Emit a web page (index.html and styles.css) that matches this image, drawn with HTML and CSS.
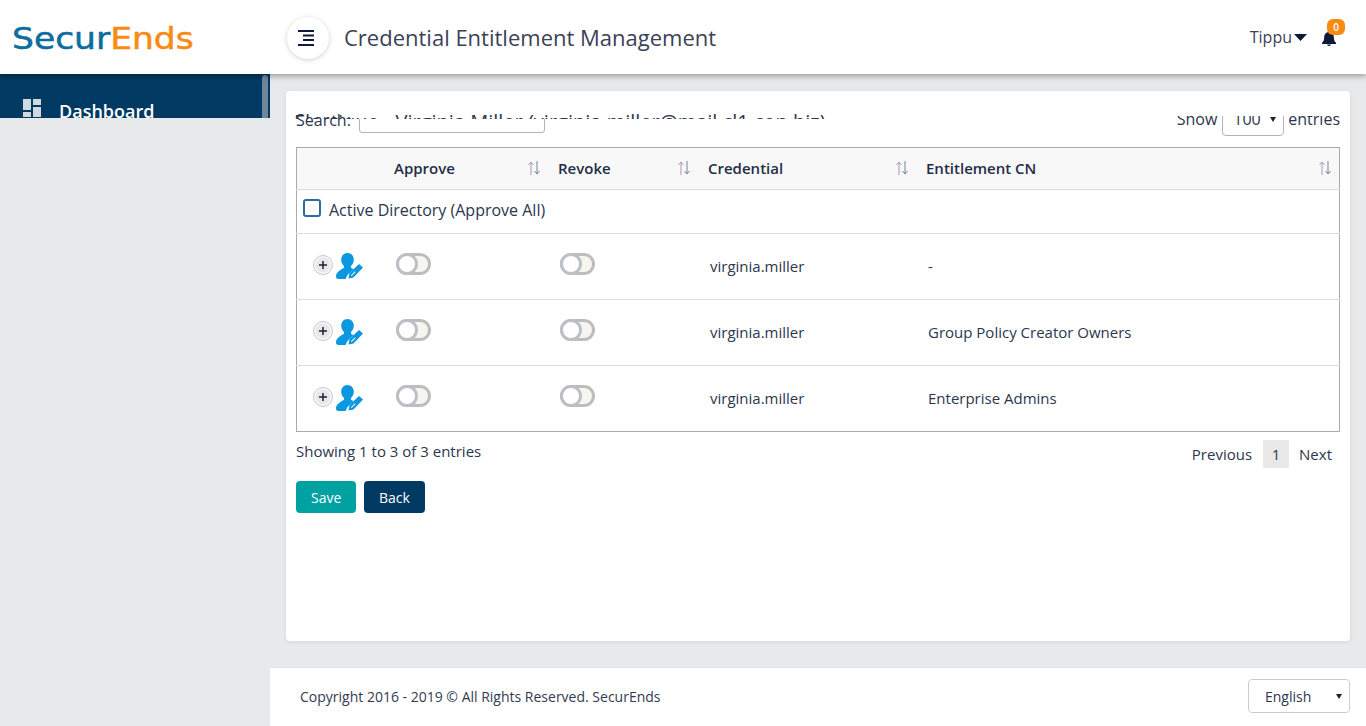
FILE: index.html
```html
<!DOCTYPE html>
<html lang="en">
<head>
<meta charset="utf-8">
<title>Credential Entitlement Management</title>
<link rel="stylesheet" href="styles.css">
</head>
<body>
<header class="topbar">
  <div class="brand"><div class="brand-text"><span class="brand-a">Secur</span><span class="brand-b">Ends</span></div></div>
  <div class="topbar-main">
    <button class="menu-btn" aria-label="Menu">
      <svg width="16" height="16" viewBox="0 0 16 16"><path d="M0 1h16M5 5.500h11M5 10h11M0 15h16" stroke="#0e1a3a" stroke-width="2" fill="none"/></svg>
    </button>
    <h1 class="page-title">Credential Entitlement Management</h1>
    <div class="user">Tippu<svg class="caret" width="13" height="7" viewBox="0 0 13 7"><path d="M0 0h13L6.500 7z" fill="#0e1a3a"/></svg></div>
    <div class="bell">
      <svg width="14" height="15" viewBox="0 0 14 15"><path d="M7 0a1.200 1.200 0 0 0-1.200 1.300C3.500 1.800 2.200 3.600 2.200 6c0 3.500-1 4.600-2.200 5.800V13h14v-1.200C12.800 10.600 11.800 9.500 11.800 6c0-2.400-1.300-4.200-3.600-4.700A1.200 1.200 0 0 0 7 0zM5.200 13.500a1.800 1.500 0 0 0 3.600 0z" fill="#0e1a3a"/></svg>
      <span class="badge">0</span>
    </div>
  </div>
</header>
<div class="layout">
  <aside class="sidebar-wrap">
    <nav class="sidebar">
      <a class="nav-item">
        <svg width="18" height="18" viewBox="0 0 18 18"><path d="M0 0h8v11H0zM10 0h8v6h-8zM0 13h8v5H0zM10 8h8v10h-8z" fill="#d0d8e0"/></svg>
        <span>Dashboard</span>
      </a>
      <div class="thumb"></div>
    </nav>
  </aside>
  <div class="main">
    <main class="content">
      <section class="card">
        <div class="card-title">Elastique - Virginia Miller (virginia.miller@mail.cl1.con.biz)</div>
        <div class="toolbar">
          <div class="search"><label class="search-label">Search:</label><input class="search-input" type="text"></div>
          <div class="length"><span class="length-show">Show</span><select class="length-select"><option>100</option></select><span>entries</span></div>
        </div>
        <table class="grid">
          <colgroup><col class="c0"><col class="c1"><col class="c2"><col class="c3"><col></colgroup>
          <thead>
            <tr>
              <th></th>
              <th><div class="th-in">Approve<svg class="sort" width="14" height="14" viewBox="0 0 14 14"><path d="M4 14V1M1.500 4L4 1l2.500 3" stroke="#a99aa9" fill="none"/><path d="M10 0v13M7.500 10l2.500 3 2.500-3" stroke="#76829a" fill="none"/></svg></div></th>
              <th><div class="th-in">Revoke<svg class="sort" width="14" height="14" viewBox="0 0 14 14"><path d="M4 14V1M1.500 4L4 1l2.500 3" stroke="#a99aa9" fill="none"/><path d="M10 0v13M7.500 10l2.500 3 2.500-3" stroke="#76829a" fill="none"/></svg></div></th>
              <th><div class="th-in">Credential<svg class="sort" width="14" height="14" viewBox="0 0 14 14"><path d="M4 14V1M1.500 4L4 1l2.500 3" stroke="#a99aa9" fill="none"/><path d="M10 0v13M7.500 10l2.500 3 2.500-3" stroke="#76829a" fill="none"/></svg></div></th>
              <th><div class="th-in">Entitlement CN<svg class="sort" width="14" height="14" viewBox="0 0 14 14"><path d="M4 14V1M1.500 4L4 1l2.500 3" stroke="#a99aa9" fill="none"/><path d="M10 0v13M7.500 10l2.500 3 2.500-3" stroke="#76829a" fill="none"/></svg></div></th>
            </tr>
          </thead>
          <tbody>
            <tr class="group">
              <td colspan="5"><div class="group-in"><span class="check"></span><span>Active Directory (Approve All)</span></div></td>
            </tr>
            <tr>
              <td><div class="tools"><span class="expander"><svg width="8" height="8" viewBox="0 0 8 8"><path d="M4 0v8M0 4h8" stroke="#222" stroke-width="1.500"/></svg></span><svg class="user-icon" width="27" height="26" viewBox="0 0 27 26"><path d="M11.500 0c3.700 0 6.300 2.800 6.300 6.800 0 2.700-1.200 4.900-2.800 6.100v1.900l2.500 1.100L11.500 22 9.500 26H2.500C.8 26 0 25 0 23.500c0-3.800 3.200-5.900 8-8.700v-1.900C6.400 11.700 5.200 9.500 5.200 6.800 5.200 2.800 7.800 0 11.500 0z" fill="#0b98e0"/><path d="M12.500 25.500l1-5.500L23 11l4 3.500L17.500 24.500zM15 22.300l.6.600 4-4-.6-.6z" fill="#0b98e0" fill-rule="evenodd"/></svg></div></td>
              <td><span class="toggle"></span></td>
              <td><span class="toggle"></span></td>
              <td class="cell-text">virginia.miller</td>
              <td class="cell-text">-</td>
            </tr>
            <tr>
              <td><div class="tools"><span class="expander"><svg width="8" height="8" viewBox="0 0 8 8"><path d="M4 0v8M0 4h8" stroke="#222" stroke-width="1.500"/></svg></span><svg class="user-icon" width="27" height="26" viewBox="0 0 27 26"><path d="M11.500 0c3.700 0 6.300 2.800 6.300 6.800 0 2.700-1.200 4.900-2.800 6.100v1.900l2.500 1.100L11.500 22 9.500 26H2.500C.8 26 0 25 0 23.500c0-3.800 3.200-5.900 8-8.700v-1.900C6.400 11.700 5.200 9.500 5.200 6.800 5.200 2.800 7.800 0 11.500 0z" fill="#0b98e0"/><path d="M12.500 25.500l1-5.500L23 11l4 3.500L17.500 24.500zM15 22.300l.6.600 4-4-.6-.6z" fill="#0b98e0" fill-rule="evenodd"/></svg></div></td>
              <td><span class="toggle"></span></td>
              <td><span class="toggle"></span></td>
              <td class="cell-text">virginia.miller</td>
              <td class="cell-text">Group Policy Creator Owners</td>
            </tr>
            <tr>
              <td><div class="tools"><span class="expander"><svg width="8" height="8" viewBox="0 0 8 8"><path d="M4 0v8M0 4h8" stroke="#222" stroke-width="1.500"/></svg></span><svg class="user-icon" width="27" height="26" viewBox="0 0 27 26"><path d="M11.500 0c3.700 0 6.300 2.800 6.300 6.800 0 2.700-1.200 4.900-2.800 6.100v1.900l2.500 1.100L11.500 22 9.500 26H2.500C.8 26 0 25 0 23.500c0-3.800 3.200-5.900 8-8.700v-1.900C6.400 11.700 5.200 9.500 5.200 6.800 5.200 2.800 7.800 0 11.500 0z" fill="#0b98e0"/><path d="M12.500 25.500l1-5.500L23 11l4 3.500L17.500 24.500zM15 22.300l.6.600 4-4-.6-.6z" fill="#0b98e0" fill-rule="evenodd"/></svg></div></td>
              <td><span class="toggle"></span></td>
              <td><span class="toggle"></span></td>
              <td class="cell-text">virginia.miller</td>
              <td class="cell-text">Enterprise Admins</td>
            </tr>
          </tbody>
        </table>
        <div class="table-foot">
          <div class="info">Showing 1 to 3 of 3 entries</div>
          <div class="pager"><span>Previous</span><span class="page-cur">1</span><span>Next</span></div>
        </div>
        <div class="actions">
          <button class="btn btn-save">Save</button>
          <button class="btn btn-back">Back</button>
        </div>
      </section>
    </main>
    <footer class="footer">
      <div class="copyright">Copyright 2016 - 2019 © All Rights Reserved. SecurEnds</div>
      <select class="lang"><option>English</option></select>
    </footer>
  </div>
</div>
</body>
</html>
```
FILE: styles.css
```css
*, *::before, *::after { box-sizing: border-box; }
html, body { height: 100%; }
body {
  margin: 0;
  overflow: hidden;
  background: #e8e9eb;
  color: #2c3650;
  font: 15px/20px "Open Sans", "Noto Sans", sans-serif;
}
.topbar {
  position: relative;
  z-index: 3;
  display: flex;
  height: 74px;
  background: #fff;
  box-shadow: 0 2px 6px rgba(0, 0, 0, .35);
}
.brand {
  width: 270px;
  padding: 22px 0 0 12px;
}
.brand-text {
  font: 30px/34px "DejaVu Sans", sans-serif;
  -webkit-text-stroke: .5px;
  transform: scaleX(1.15);
  transform-origin: left center;
  white-space: nowrap;
}
.brand-a { color: #0c6d9f; }
.brand-b { color: #f98a12; }
.topbar-main {
  flex: 1;
  display: flex;
  align-items: center;
  padding-left: 17px;
}
.menu-btn {
  display: flex;
  align-items: center;
  justify-content: center;
  width: 42px;
  height: 42px;
  margin-top: 2px;
  padding: 0 4px 1px 0;
  border: 0;
  border-radius: 50%;
  background: #fff;
  box-shadow: 0 1px 5px rgba(0, 0, 0, .18);
}
.page-title {
  flex: 1;
  margin: 0 0 0 15px;
  color: #3a4256;
  font-size: 22px;
  font-weight: 400;
  line-height: 30px;
}
.user {
  display: flex;
  align-items: center;
  color: #3a4256;
  font-size: 16px;
}
.caret { margin: 1px 0 0 2px; }
.bell {
  position: relative;
  width: 14px;
  height: 15px;
  margin: 3px 30px 0 15px;
}
.bell svg { display: block; }
.badge {
  position: absolute;
  top: -12px;
  left: 5px;
  width: 18px;
  height: 16px;
  border-radius: 6px;
  background: #f98a12;
  color: #fff;
  font-size: 10px;
  font-weight: 600;
  line-height: 16px;
  text-align: center;
}
.layout {
  display: flex;
  height: 652px;
}
.sidebar-wrap { width: 270px; }
.sidebar {
  position: relative;
  height: 44px;
  overflow: hidden;
  background: #003a63;
}
.nav-item {
  display: flex;
  align-items: flex-start;
  gap: 18px;
  padding: 25px 0 0 23px;
  color: #fff;
  font-size: 18px;
  font-weight: 600;
  line-height: 25px;
}
.thumb {
  position: absolute;
  top: 1px;
  right: 2px;
  width: 6px;
  height: 60px;
  border-radius: 3px;
  background: #6f8599;
}
.main {
  flex: 1;
  display: flex;
  flex-direction: column;
}
.content {
  flex: 1;
  padding: 17px 16px 26px;
}
.card {
  position: relative;
  height: 550px;
  padding: 10px 10px 0;
  border-radius: 4px;
  background: #fff;
  box-shadow: 0 1px 4px rgba(0, 0, 0, .08);
}
.card-title {
  position: absolute;
  z-index: 1;
  top: 0;
  left: 8px;
  right: 190px;
  height: 28px;
  padding-top: 18px;
  overflow: hidden;
  background: #fff;
  color: #2c3650;
  font-size: 20px;
  line-height: 26px;
  white-space: nowrap;
}
.toolbar {
  display: flex;
  justify-content: space-between;
  height: 47px;
  font-size: 16px;
  margin-bottom: -1px;
}
.search { display: flex; align-items: flex-start; }
.search-label {
  position: relative;
  z-index: 2;
  margin-top: 9px;
  line-height: 20px;
}
.search-input {
  width: 186px;
  height: 30px;
  margin: 2px 0 0 8px;
  border: 1px solid #b5b5b5;
  border-radius: 3px;
  background: #fff;
}
.length {
  display: flex;
  align-items: flex-start;
  gap: 4px;
  line-height: 20px;
  clip-path: inset(15px 0 0 0);
}
.length > span { margin-top: 8px; }
.length-show { margin-right: 1px; }
.length-select {
  appearance: none;
  width: 62px;
  height: 34px;
  margin-top: 1px;
  padding-left: 10px;
  border: 1px solid #b5b5b5;
  border-radius: 4px;
  background: #fff url("data:image/svg+xml,%3Csvg xmlns='http://www.w3.org/2000/svg' width='6' height='5'%3E%3Cpath d='M0 0h6L3 5z' fill='%231a2238'/%3E%3C/svg%3E") no-repeat right 7px center;
  color: #2c3650;
  font: 16px "Open Sans", sans-serif;
}
.grid {
  width: 100%;
  table-layout: fixed;
  border-collapse: collapse;
  border: 1px solid #aaa;
}
.c0 { width: 87.500px; }
.c1 { width: 164px; }
.c2 { width: 150px; }
.c3 { width: 218px; }
.grid th {
  height: 42px;
  padding: 0 7px 2px 10px;
  border-bottom: 1px solid #ddd;
  background: #f8f8f8;
  color: #232d45;
  font-weight: 600;
  text-align: left;
}
.th-in {
  display: flex;
  align-items: center;
  justify-content: space-between;
}
.grid td {
  height: 66px;
  padding: 0 12px;
  border-bottom: 1px solid #ddd;
  color: #2c3650;
}
.grid .cell-text { padding-bottom: 2px; }
.grid tr:last-child td { border-bottom: 0; }
.grid .group td {
  height: 44px;
  padding: 0 6px;
}
.group-in {
  display: flex;
  align-items: center;
  gap: 8px;
  font-size: 16px;
  margin-top: -4px;
}
.check {
  width: 18px;
  height: 18px;
  margin-top: -3px;
  border: 2px solid #2d6a9f;
  border-radius: 3px;
  background: #fff;
}
.tools {
  display: flex;
  align-items: center;
  gap: 3px;
  margin: -2px -12px 0 4px;
}
.expander {
  display: flex;
  align-items: center;
  justify-content: center;
  flex: none;
  width: 20px;
  height: 20px;
  margin-top: -2px;
  border: 1.500px solid #c9c9c9;
  border-radius: 50%;
  background: #e6e8ee;
  box-shadow: inset 0 0 0 1.500px #fafafa;
}
.expander svg { display: block; }
.user-icon { flex: none; }
.toggle {
  position: relative;
  display: block;
  width: 35px;
  height: 22px;
  margin-top: -6px;
  border: 3px solid #bdbdbd;
  border-radius: 11px;
  background: #f6f5ef;
}
.toggle::before {
  content: "";
  position: absolute;
  top: -3px;
  left: -3px;
  width: 22px;
  height: 22px;
  border: 3px solid #bcc0c6;
  border-radius: 50%;
  background: #fff;
}
.table-foot {
  display: flex;
  justify-content: space-between;
  align-items: flex-start;
  height: 49px;
  padding-top: 8px;
}
.info { margin-top: 1px; }
.pager {
  display: flex;
  align-items: center;
  gap: 11px;
  margin-right: 8px;
}
.page-cur {
  width: 26px;
  height: 28px;
  margin-right: -1px;
  border-radius: 2px;
  background: #e8e8e8;
  line-height: 28px;
  text-align: center;
}
.actions {
  display: flex;
  gap: 8px;
}
.btn {
  height: 32px;
  padding: 0 15px;
  border: 0;
  border-radius: 4px;
  color: #fff;
  font: 14px "Open Sans", sans-serif;
}
.btn-save { width: 60px; background: #00a1a1; }
.btn-back { width: 61px; background: #003a63; }
.footer {
  display: flex;
  justify-content: space-between;
  align-items: center;
  height: 59px;
  padding: 0 16px 0 30px;
  border-top: 1px solid #e0e4ec;
  background: #fff;
  font-size: 14px;
}
.copyright { color: #333b50; }
.lang {
  appearance: none;
  width: 102px;
  height: 34px;
  margin-bottom: 2px;
  padding-left: 16px;
  border: 1px solid #ccc;
  border-radius: 4px;
  background: #fff url("data:image/svg+xml,%3Csvg xmlns='http://www.w3.org/2000/svg' width='6' height='5'%3E%3Cpath d='M0 0h6L3 5z' fill='%231a2238'/%3E%3C/svg%3E") no-repeat right 7px center;
  color: #2c3650;
  font: 14px "Open Sans", sans-serif;
}
```
